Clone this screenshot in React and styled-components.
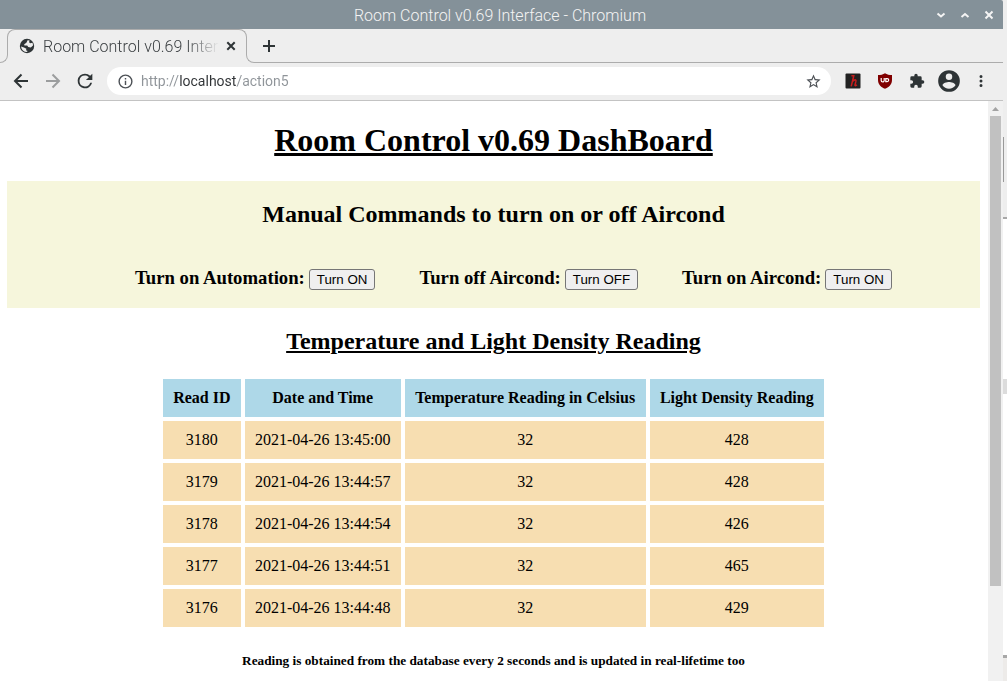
import React from "react";
import styled, { createGlobalStyle } from "styled-components";

const GlobalStyle = createGlobalStyle`
  body { margin: 0; background: #fff; }
`;

const CHROME = "#eeeeee";
const INK = "#2e3436";
const LINE = "#acacac";

const Desktop = styled.div`
  display: flex;
  height: 100vh;
  overflow: hidden;
  background: ${CHROME};
`;

const BrowserWindow = styled.div`
  flex: 1;
  min-width: 0;
  display: flex;
  flex-direction: column;
  font-family: Roboto, "Liberation Sans", sans-serif;
  font-weight: 300;
`;

const TitleBar = styled.header`
  flex: none;
  display: grid;
  grid-template-columns: 69px 1fr 72px;
  align-items: center;
  height: 29px;
  background: #849199;
  color: #f4f4f4;
  border-top-right-radius: 2px;
`;

const WindowTitle = styled.span`
  grid-column: 2;
  text-align: center;
  font-size: 16px;
  line-height: 20px;
  padding-top: 2px;
`;

const WindowButtons = styled.div`
  display: flex;
  justify-content: flex-end;
  gap: 8px;
  padding-right: 6px;
`;

const IconButton = styled.button`
  flex: none;
  display: flex;
  align-items: center;
  justify-content: center;
  width: ${(p) => p.$size}px;
  height: ${(p) => p.$size}px;
  padding: 0;
  border: 0;
  background: none;
  color: ${(p) => p.$color || INK};

  svg { flex: none; }
`;

const TabStrip = styled.div`
  flex: none;
  display: flex;
  height: 34px;
`;

const Tab = styled.div`
  position: relative;
  box-sizing: border-box;
  width: 240px;
  height: 25px;
  margin-left: 7px;
  padding: 8px 7px 0 11px;
  display: flex;
  align-items: center;
  border: 1px solid ${LINE};
  border-bottom: 0;
  border-radius: 8px 8px 0 0;

  &::before,
  &::after {
    content: "";
    position: absolute;
    top: 24px;
    box-sizing: border-box;
    width: 8px;
    height: 9px;
    border-bottom: 1px solid ${LINE};
  }
  &::before {
    left: -8px;
    border-right: 1px solid ${LINE};
    border-bottom-right-radius: 8px;
  }
  &::after {
    right: -8px;
    border-left: 1px solid ${LINE};
    border-bottom-left-radius: 8px;
  }
`;

const TabTitle = styled.span`
  flex: 1;
  min-width: 0;
  margin: 0 4px 0 8px;
  padding-top: 1px;
  overflow: hidden;
  white-space: nowrap;
  font-size: 16px;
  line-height: 20px;
  color: #3c4043;
  mask-image: linear-gradient(to right, #000 82%, transparent 100%);
`;

const TabStripRest = styled.div`
  flex: 1;
  display: flex;
  align-items: center;
  margin-left: 7px;
  padding-left: 5px;
  border-bottom: 1px solid ${LINE};
`;

const Toolbar = styled.nav`
  flex: none;
  display: flex;
  align-items: center;
  height: 36px;
  padding: 0 10px 1px 11px;
  border-bottom: 1px solid #c3c3c3;
`;

const NavButtons = styled.div`
  display: flex;
  gap: 12px;
  margin-right: 12px;
`;

const AddressBar = styled.label`
  flex: 1;
  min-width: 0;
  display: flex;
  align-items: center;
  gap: 8px;
  height: 28px;
  padding: 0 8px 0 10px;
  border-radius: 14px;
  background: #fff;
`;

/* Scheme and path are dimmed, the host is dark: 39px scheme, 57px host. */
const AddressInput = styled.input`
  flex: 1;
  min-width: 0;
  height: 20px;
  padding: 0;
  border: 0;
  outline: 0;
  font: 400 14px Roboto, "Liberation Sans", sans-serif;
  color: #8f9499;
  background: linear-gradient(to right, #8f9499 39px, #303336 39px 96px, #8f9499 96px);
  background-clip: text;
  -webkit-text-fill-color: transparent;
`;

const Extensions = styled.div`
  display: flex;
  align-items: center;
  gap: 8px;
  margin-left: 10px;
`;

const Viewport = styled.div`
  flex: 1;
  min-height: 0;
  display: flex;
  background: #fff;
`;

const Page = styled.main`
  flex: 1;
  min-width: 0;
  overflow: hidden;
  padding: 0 8px 0 7px;
  color: #000;
  font: 400 16px "Liberation Serif", "Times New Roman", serif;
  text-align: center;
`;

const PageTitle = styled.h1`
  margin: 21px 0;
  padding-bottom: 2px;
  font-size: 32px;
  line-height: 36px;
  text-decoration: underline;
`;

const Section = styled.section`
  display: flow-root;
  background: ${(p) => p.$fill || "transparent"};
`;

const SectionTitle = styled.h2`
  margin: 20px 0;
  font-size: 24px;
  line-height: 27px;
  text-decoration: ${(p) => (p.$underlined ? "underline" : "none")};
`;

const CommandList = styled.ul`
  display: flex;
  justify-content: center;
  gap: 44px;
  margin: 0;
  padding: 0 0 0 40px;
  list-style: none;
`;

const Command = styled.h3`
  margin: 19px 0 18px;
  line-height: 22px;
  white-space: nowrap;
`;

const CommandButton = styled.button`
  margin-left: 4px;
  padding: 2px 7px;
  border: 1px solid #767676;
  border-radius: 3px;
  background: #efefef;
  color: #000;
  font-family: "Liberation Sans", Arial, sans-serif;
  vertical-align: baseline;
`;

const Readings = styled.table`
  width: 669px;
  margin: 0 auto;
  border-spacing: 4px;
  font-size: 16px;
  line-height: 18px;
`;

const HeadCell = styled.th`
  padding: 10px;
  background: #aed8e8;
`;

const Cell = styled.td`
  padding: 10px;
  background: #f7deb1;
`;

const Note = styled.h5`
  margin: 22px 0;
  line-height: 15px;
`;

const ScrollTrack = styled.div`
  flex: none;
  width: 15px;
  display: flex;
  flex-direction: column;
  align-items: center;
  background: #f1f1f1;
`;

const ScrollThumb = styled.div`
  width: 11px;
  height: 81%;
  background: #c1c1c1;
`;

/* Sliver of the windows that sit behind the browser. */
const Behind = styled.div`
  flex: none;
  width: 4px;
  display: flex;
  flex-direction: column;
  background: #fff;
`;

const BehindPart = styled.div`
  box-sizing: border-box;
  flex: ${(p) => (p.$h ? "none" : 1)};
  height: ${(p) => (p.$h ? `${p.$h}px` : "auto")};
  background: ${(p) => p.$fill || "#fff"};
  border-left: ${(p) => (p.$edge ? `1px solid ${p.$edge}` : "0")};
`;

const Stroke = ({ size, box = 24, width = 2, d }) => (
  <svg width={size} height={size} viewBox={`0 0 ${box} ${box}`} fill="none" stroke="currentColor" strokeWidth={width} aria-hidden="true">
    <path d={d} />
  </svg>
);

const Solid = ({ size, d }) => (
  <svg width={size} height={size} viewBox="0 0 24 24" fill="currentColor" aria-hidden="true">
    <path d={d} />
  </svg>
);

const Globe = () => (
  <svg width="16" height="16" viewBox="0 0 16 16" aria-hidden="true">
    <circle cx="8" cy="8" r="7.2" fill={INK} />
    <path d="M8.600 2.200 10.600 2.600 10 4.200 11.400 5.200 13.400 4.800A6 6 0 0 1 14 7.600L11.800 9.400 9.200 9 8.200 7.600 5.400 7.600 5.200 6.200 7.400 4.800Z" fill={CHROME} />
    <path d="M2 8.600 5 9.400 7.400 10.800 7 12.200 8.600 13 8 14A6 6 0 0 1 2 8.600Z" fill={CHROME} />
  </svg>
);

const Hypothesis = () => (
  <svg width="16" height="16" viewBox="0 0 16 16" aria-hidden="true">
    <rect width="15" height="15" x="0.5" y="0.5" rx="1" fill="#222" />
    <path d="M6.400 2.800H8.800L6.200 13.400M6.900 9.400C8.200 7 11.500 5.600 10.900 8.400L10 12C9.900 13 10.800 12.900 11.900 11.800" fill="none" stroke="#c81e1e" strokeWidth="1.5" />
  </svg>
);

const Shield = () => (
  <svg width="16" height="16" viewBox="0 0 16 16" aria-hidden="true">
    <path d="M8 .3C6 1.7 3.6 2 1 2v5c0 5 3.5 7.200 7 8.800C11.500 14.200 15 12 15 7V2C12.400 2 10 1.700 8 .3Z" fill="#800000" />
    <path d="M4.200 5v2.400a1.500 1.500 0 0 0 3 0V5M8.800 5.600v3h1.400a1.500 1.500 0 0 0 0-3Z" fill="none" stroke="#fff" strokeWidth="1.200" />
  </svg>
);

const STAR = "M22 9.24l-7.190-.62L12 2 9.190 8.630 2 9.240l5.460 4.730L5.820 21 12 17.270 18.180 21l-1.630-7.030L22 9.240zM12 15.400l-3.760 2.270 1-4.280-3.320-2.880 4.380-.38L12 6.100l1.710 4.040 4.380.38-3.320 2.880 1 4.280L12 15.400z";
const RELOAD = "M17.650 6.350A7.960 7.960 0 0 0 12 4a8 8 0 1 0 7.730 10h-2.080A6 6 0 1 1 12 6c1.660 0 3.140.69 4.220 1.780L13 11h7V4l-2.350 2.350z";
const INFO = "M11 7h2v2h-2zm0 4h2v6h-2zm1-9a10 10 0 1 0 0 20 10 10 0 0 0 0-20zm0 18a8 8 0 1 1 0-16 8 8 0 0 1 0 16z";
const PUZZLE = "M20.500 11H19V7a2 2 0 0 0-2-2h-4V3.500a2.500 2.500 0 0 0-5 0V5H4a2 2 0 0 0-2 2v3.800h1.500a2.700 2.700 0 0 1 0 5.400H2V20a2 2 0 0 0 2 2h3.800v-1.500a2.700 2.700 0 0 1 5.400 0V22H17a2 2 0 0 0 2-2v-4h1.500a2.500 2.500 0 0 0 0-5z";
const PERSON = "M12 2a10 10 0 1 0 0 20 10 10 0 0 0 0-20zm0 3a3 3 0 1 1 0 6 3 3 0 0 1 0-6zm0 14.200a7.200 7.200 0 0 1-6-3.220c.03-1.990 4-3.080 6-3.080s5.970 1.090 6 3.080a7.200 7.200 0 0 1-6 3.220z";
const DOTS = "M12 8a2 2 0 1 0 0-4 2 2 0 0 0 0 4zm0 2a2 2 0 1 0 0 4 2 2 0 0 0 0-4zm0 6a2 2 0 1 0 0 4 2 2 0 0 0 0-4z";

const commands = [
  { label: "Turn on Automation:", action: "Turn ON" },
  { label: "Turn off Aircond:", action: "Turn OFF" },
  { label: "Turn on Aircond:", action: "Turn ON" },
];

const columns = ["Read ID", "Date and Time", "Temperature Reading in Celsius", "Light Density Reading"];

const readings = [
  [3180, "2021-04-26 13:45:00", 32, 428],
  [3179, "2021-04-26 13:44:57", 32, 428],
  [3178, "2021-04-26 13:44:54", 32, 426],
  [3177, "2021-04-26 13:44:51", 32, 465],
  [3176, "2021-04-26 13:44:48", 32, 429],
];

export default function App() {
  return (
    <Desktop>
      <GlobalStyle />
      <BrowserWindow>
        <TitleBar>
          <WindowTitle>Room Control v0.69 Interface - Chromium</WindowTitle>
          <WindowButtons>
            <IconButton $size={16} $color="#f4f4f4" aria-label="Minimize">
              <Stroke size={16} box={16} d="M4.500 6.500 8 9.500 11.500 6.500" />
            </IconButton>
            <IconButton $size={16} $color="#f4f4f4" aria-label="Maximize">
              <Stroke size={16} box={16} d="M4.500 10 8 7 11.500 10" />
            </IconButton>
            <IconButton $size={16} $color="#f4f4f4" aria-label="Close window">
              <Stroke size={16} box={16} d="M4.500 4.500 11.500 11.500M11.500 4.500 4.500 11.500" />
            </IconButton>
          </WindowButtons>
        </TitleBar>

        <TabStrip>
          <Tab>
            <Globe />
            <TabTitle>Room Control v0.69 Interface</TabTitle>
            <IconButton $size={16} aria-label="Close tab">
              <Stroke size={16} box={16} d="M4.300 4.300 11.700 11.700M11.700 4.300 4.300 11.700" />
            </IconButton>
          </Tab>
          <TabStripRest>
            <IconButton $size={20} aria-label="New tab">
              <Stroke size={20} box={20} d="M10 4V16M4 10H16" />
            </IconButton>
          </TabStripRest>
        </TabStrip>

        <Toolbar>
          <NavButtons>
            <IconButton $size={20} aria-label="Back">
              <Stroke size={20} box={20} d="M17 10H4M10.500 3.500 4 10 10.500 16.500" />
            </IconButton>
            <IconButton $size={20} $color="#9b9d9e" aria-label="Forward">
              <Stroke size={20} box={20} d="M3 10H16M9.500 3.500 16 10 9.500 16.500" />
            </IconButton>
            <IconButton $size={20} aria-label="Reload">
              <Solid size={22} d={RELOAD} />
            </IconButton>
          </NavButtons>
          <AddressBar>
            <IconButton $size={16} $color="#4d5156" aria-label="Site information">
              <Solid size={17} d={INFO} />
            </IconButton>
            <AddressInput aria-label="Address" defaultValue="http://localhost/action5" />
            <IconButton $size={20} $color="#4d5156" aria-label="Bookmark">
              <Solid size={17} d={STAR} />
            </IconButton>
          </AddressBar>
          <Extensions>
            <IconButton $size={24} aria-label="Hypothesis">
              <Hypothesis />
            </IconButton>
            <IconButton $size={24} aria-label="uBlock Origin">
              <Shield />
            </IconButton>
            <IconButton $size={24} aria-label="Extensions">
              <Solid size={16} d={PUZZLE} />
            </IconButton>
            <IconButton $size={24} aria-label="Profile">
              <Solid size={26} d={PERSON} />
            </IconButton>
            <IconButton $size={24} aria-label="Menu">
              <Solid size={18} d={DOTS} />
            </IconButton>
          </Extensions>
        </Toolbar>

        <Viewport>
          <Page>
            <PageTitle>Room Control v0.69 DashBoard</PageTitle>
            <Section $fill="#f6f6dc">
              <SectionTitle>Manual Commands to turn on or off Aircond</SectionTitle>
              <CommandList>
                {commands.map((c) => (
                  <li key={c.label}>
                    <Command>
                      {c.label}
                      <CommandButton>{c.action}</CommandButton>
                    </Command>
                  </li>
                ))}
              </CommandList>
            </Section>
            <Section>
              <SectionTitle $underlined>Temperature and Light Density Reading</SectionTitle>
              <Readings>
                <thead>
                  <tr>
                    {columns.map((name) => (
                      <HeadCell key={name} scope="col">{name}</HeadCell>
                    ))}
                  </tr>
                </thead>
                <tbody>
                  {readings.map((row) => (
                    <tr key={row[0]}>
                      {row.map((value, i) => (
                        <Cell key={columns[i]}>{value}</Cell>
                      ))}
                    </tr>
                  ))}
                </tbody>
              </Readings>
              <Note>Reading is obtained from the database every 2 seconds and is updated in real-lifetime too</Note>
            </Section>
          </Page>
          <ScrollTrack>
            <IconButton $size={15} $color="#a3a3a3" aria-label="Scroll up">
              <svg width="15" height="15" viewBox="0 0 15 15" fill="currentColor" aria-hidden="true">
                <path d="M4 10 7.500 6 11 10Z" />
              </svg>
            </IconButton>
            <ScrollThumb />
          </ScrollTrack>
        </Viewport>
      </BrowserWindow>
      <Behind>
        <BehindPart $h={137} $fill={CHROME} />
        <BehindPart $h={45} $fill={CHROME} $edge="#999" />
        <BehindPart $h={35} $fill={CHROME} />
        <BehindPart $h={2} $fill="#a8a8a8" />
        <BehindPart $h={160} />
        <BehindPart $h={15} $fill="#dcdcdc" />
        <BehindPart />
        <BehindPart $h={3} $fill="#a8a8a8" />
        <BehindPart $h={23} $fill="#edebe9" />
      </Behind>
    </Desktop>
  );
}
